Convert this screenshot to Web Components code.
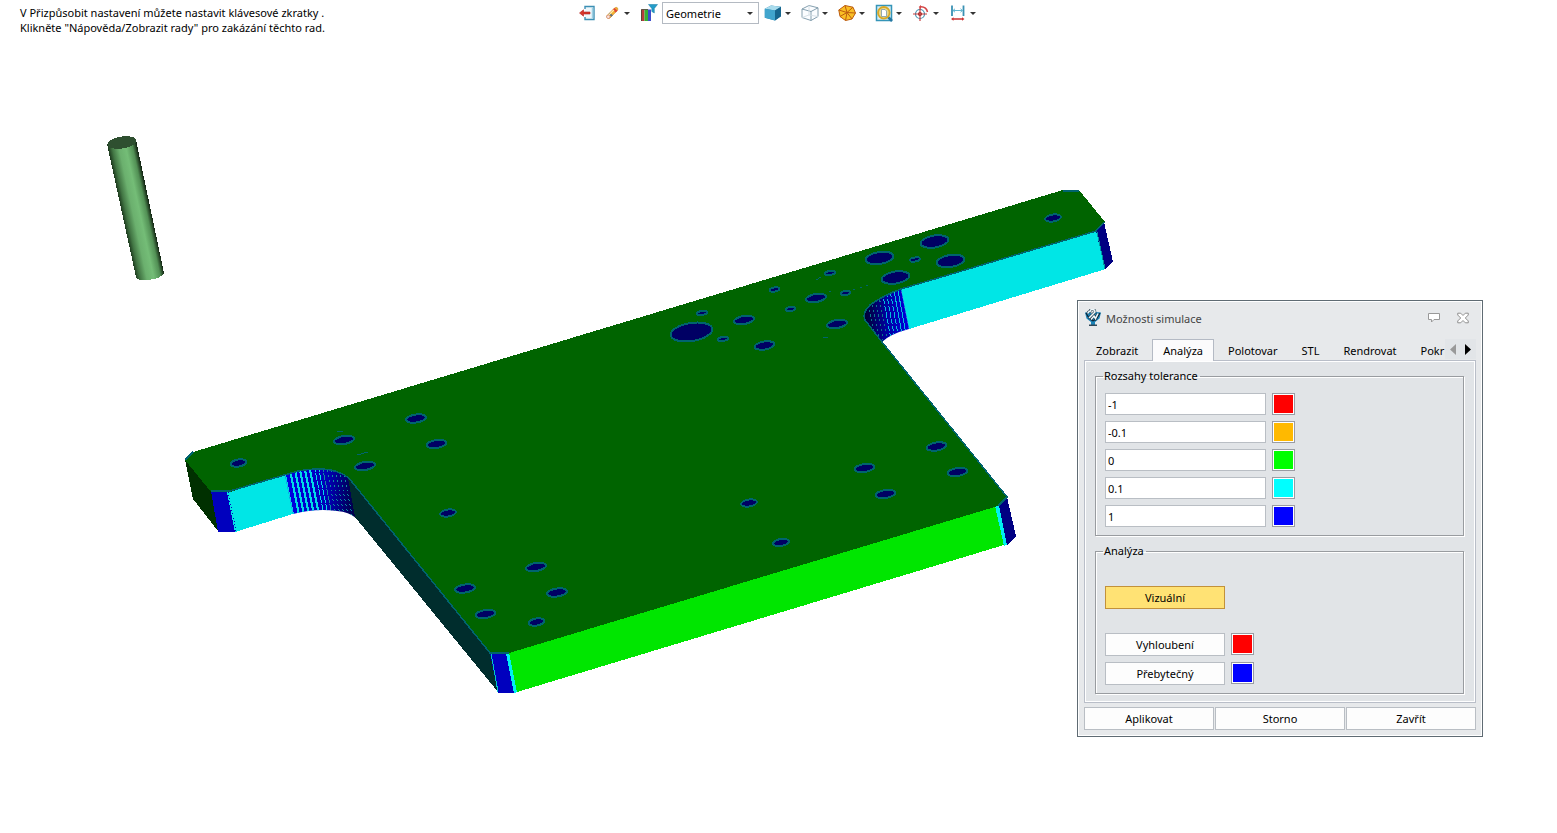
<!DOCTYPE html>
<html lang="cs">
<head>
<meta charset="utf-8">
<title>Možnosti simulace</title>
<style>
html, body { height: 100%; margin: 0; }
body { background: #fff; color: #000; font: 11px/15px "Noto Sans", "Open Sans", sans-serif; overflow: hidden; }
</style>
</head>
<body>
<cam-workspace></cam-workspace>
<script>
const define = (name, html, setup) => {
  const template = document.createElement('template');
  template.innerHTML = html;
  customElements.define(name, class extends HTMLElement {
    connectedCallback() {
      if (this.shadowRoot) return;
      this.attachShadow({ mode: 'open' }).append(template.content.cloneNode(true));
      if (setup) setup(this, this.shadowRoot);
    }
  });
};

/* Toolbar button: slotted icon, optional drop-down arrow */
define('tool-button', `
<style>
:host { display: block; }
button { display: flex; align-items: center; gap: 3px; height: 22px; margin: 0; padding: 0; border: 0; background: none; }
.arrow { width: 6px; height: 3px; fill: #333; display: none; }
:host([menu]) .arrow { display: block; }
</style>
<button type="button"><slot></slot><svg class="arrow" viewBox="0 0 6 3"><path d="M0 0h6L3 3z"/></svg></button>`,
(host, root) => root.querySelector('button').setAttribute('aria-label', host.getAttribute('label')));

define('view-toolbar', `
<style>
:host { display: flex; align-items: center; gap: 10px; padding: 2px 3px 0 0; }
svg { width: 18px; height: 18px; display: block; }
.group { display: flex; align-items: center; gap: 7px; }
.filter { display: flex; align-items: center; gap: 4px; }
.pick { position: relative; display: block; }
.pick svg { position: absolute; right: 6px; top: 10px; width: 6px; height: 3px; fill: #333; pointer-events: none; }
select { appearance: none; display: block; box-sizing: border-box; width: 97px; height: 22px; margin: 0; padding: 0 14px 0 3px; border: 1px solid #b4bac2; border-radius: 0; background: #fff; color: #000; font: inherit; }
.views { display: flex; gap: 10px; margin-left: -5px; }
</style>
<div class="group">
  <tool-button label="Konec"><svg viewBox="0 0 18 18">
    <path d="M7 5V2.500h9v13H7V13" fill="#eef7fb" stroke="#3c8fb4" stroke-width="1.400"/><path d="M14.500 3.500v11" stroke="#9fd0e4" stroke-width="1.500"/>
    <path d="M1.500 9l4-3.200v2.200H12v2H5.500v2.200z" fill="#d8382c" stroke="#b02020" stroke-width=".6"/></svg></tool-button>
  <tool-button menu label="Vymazat"><svg viewBox="0 0 18 18">
    <path d="M4 11.500L11.500 4q1.800-1.300 2.900-.2 1.100 1.200 0 2.700L7 14q-1.500 1-2.700 0-1.300-1.200-.3-2.500z" fill="#f2b02f" stroke="#c87c20" stroke-width=".5"/>
    <path d="M11.500 4l3 2.700-1.800 1.800-3-2.700z" fill="#df4638"/><path d="M6.200 9.400l3 2.700" stroke="#5f6c78" stroke-width="2"/><path d="M5.500 11.300l5.500-5.500" stroke="#fff0b4" stroke-width="1.200"/>
    <ellipse cx="5.300" cy="12.800" rx="1.700" ry="1.700" fill="#f9e3dc" stroke="#c56d60" stroke-width=".5"/></svg></tool-button>
</div>
<div class="filter">
  <tool-button label="Filtr barev"><svg viewBox="0 0 18 18">
    <path d="M1 5.500h3.500V17H1z" fill="#b83c3c"/><path d="M4.500 5.500H8V17H4.500z" fill="#35b135"/><path d="M8 5.500h3V17H8z" fill="#3d4dcc"/><path d="M1.500 17V5.500H8" fill="none" stroke="#443" stroke-width=".8"/>
    <path d="M8.500.500h9L14.300 4.500V9l-2.500-1.500v-3z" fill="#249cc9" stroke="#107aa3" stroke-width=".5"/></svg></tool-button>
  <label class="pick"><select aria-label="Filtr výběru"><option>Geometrie</option><option>Vše</option></select><svg viewBox="0 0 6 3"><path d="M0 0h6L3 3z"/></svg></label>
</div>
<div class="views">
  <tool-button menu label="Stínování"><svg viewBox="0 0 18 18">
    <path d="M.800 4.800L7 1.500l10 1.300v9.400L11 16.500.800 13.800z" fill="#2b80aa"/><path d="M.800 4.800L7 1.500l10 1.300-6 3.600z" fill="#a9dced"/><path d="M.800 4.800L11 6.400v10.100L.800 13.800z" fill="#41a5cd"/><path d="M11 6.400l6-3.600v9.400l-6 4.300z" fill="#17668e"/></svg></tool-button>
  <tool-button menu label="Pohledy"><svg viewBox="0 0 18 18" fill="#fbfdff" stroke="#7895a6" stroke-width=".9" stroke-linejoin="round">
    <path d="M1 5l7-3.500 9 2.300v8.700l-7 4L1 13.500z"/><path d="M1 5l9 2.500 7-3.700M10 7.500v9" fill="none"/><path d="M8 1.500V11l-7 2.500M8 11l9 1.500" fill="none" stroke="#d2dde3"/></svg></tool-button>
  <tool-button menu label="Síť"><svg viewBox="0 0 18 18" fill="#fabf25" stroke="#bc5c10" stroke-width="1" stroke-linejoin="round">
    <path d="M.800 6L7 1.500l8 1.700 2.500 5.800L14 15l-6.500 1.500L2 12.500z"/><path d="M.800 6L9 8.500 7 1.500M9 8.500l6-5.300M9 8.500l8.500.5M9 8.500L14 15M9 8.500l-1.500 8M9 8.500l-7 4" fill="none"/></svg></tool-button>
  <tool-button menu label="Přiblížit"><svg viewBox="0 0 18 18">
    <path d="M1.500 1.500h15v15h-15z" fill="#d7eef6" stroke="#3595b8" stroke-width="1.500"/><path d="M13 13l4 4" stroke="#2577a2" stroke-width="2.500"/>
    <circle cx="8.800" cy="8.800" r="5.800" fill="#e9d98f" stroke="#d9a824" stroke-width="1.800"/><path d="M6.500 5.500h3.500l1.500 1.500v5.500h-5z" fill="#fff" stroke="#7c98a5" stroke-width=".8"/></svg></tool-button>
  <tool-button menu label="Střed otáčení"><svg viewBox="0 0 18 18" fill="none" stroke-width="1.200">
    <circle cx="8" cy="10" r="4.500" stroke="#3f93b3"/><path d="M1 10h14M8 3.500V17" stroke="#c83e3e"/><circle cx="8" cy="10" r="1.500" fill="#d34b4b" stroke="#a33"/><path d="M9 2.800q5.500.2 6.500 5.200" stroke="#d34343" stroke-width="1.500"/><path d="M9 1v4L6.700 3z" fill="#d34343"/></svg></tool-button>
  <tool-button menu label="Měření"><svg viewBox="0 0 18 18">
    <path d="M3 1.500V12M14.500 1.500V12" stroke="#3a91b3" stroke-width="1.800"/><path d="M4 6.500h9.500M6 4.800L4 6.500l2 1.700m5.500-3.400l2 1.700-2 1.700" fill="none" stroke="#62b7d2"/><path d="M2 15l2.500-1.800v1h8.500v-1l2.500 1.800-2.500 1.800v-1H4.500v1z" fill="#cc3131"/></svg></tool-button>
</div>`);

/* Simulated stock, coloured by the tolerance ranges */
define('stock-view', `
<style>
:host { display: block; }
svg { display: block; width: 100%; height: 100%; }
</style>
<svg viewBox="0 0 1557 833" preserveAspectRatio="xMidYMid meet" shape-rendering="crispEdges" role="img" aria-label="Model">
  <defs>
    <linearGradient id="tool" gradientUnits="userSpaceOnUse" x1="107" y1="144" x2="135" y2="138">
      <stop offset="0" stop-color="#1c381d"/><stop offset=".15" stop-color="#427644"/><stop offset=".38" stop-color="#6bb06e"/><stop offset=".62" stop-color="#74bd77"/><stop offset=".85" stop-color="#529055"/><stop offset="1" stop-color="#152815"/>
    </linearGradient>
    <linearGradient id="left" gradientUnits="userSpaceOnUse" x1="285" y1="0" x2="357" y2="0"><stop offset="0" stop-color="#0000e6"/><stop offset=".6" stop-color="#0000b4"/><stop offset="1" stop-color="#00003c"/></linearGradient>
    <linearGradient id="right" gradientUnits="userSpaceOnUse" x1="865" y1="0" x2="908" y2="0"><stop offset="0" stop-color="#000032"/><stop offset=".5" stop-color="#0000a0"/><stop offset="1" stop-color="#0000dc"/></linearGradient>
    <clipPath id="leftClip"><path d="M285 475L298 471Q325 466 340 473Q348 476 352 483L356 518Q349 512 337 511Q316 508 293 514z"/></clipPath>
    <clipPath id="rightClip"><path d="M901 289Q884 295 870 305Q862 313 865 320L882 342Q890 334 909 329z"/></clipPath>
  </defs>
  <path d="M107 144L136 277Q138 281 147 280Q161 279 164 273L136 140z" fill="url(#tool)"/>
  <ellipse cx="122" cy="142.500" rx="14.500" ry="6" transform="rotate(-9 122 142.500)" fill="#2e4f30"/>

  <path d="M185 460L211 491L218 531L193 499z" fill="#003000"/>
  <path d="M211 491H228L235 532H218z" fill="#0000be"/>
  <path d="M227 492L285 475L293 514L235 532z" fill="#00e6e6"/>
  <path d="M228 492L236 531" stroke="#0000be" stroke-dasharray="1 2"/>
  <g id="ribs-left" clip-path="url(#leftClip)"><path d="M280 460h80v60h-80z" fill="url(#left)"/></g>
  <path d="M348 478L491 653L498 692L355 517z" fill="#002d2d"/>
  <path d="M490 653H507L514 693H498z" fill="#0000be"/>
  <path d="M491 653L498 692" stroke="#00c8c8" stroke-width="1"/>
  <path d="M506 653H510L517 692L514 693z" fill="#00f0f0"/>
  <path d="M509 653L997 506L1004 545L517 692z" fill="#00e600"/>
  <path d="M995 506L999 505L1008 544L1004 546z" fill="#00f0f0"/>
  <path d="M999 505L1007 497L1016 536L1007 545z" fill="#000082"/>
  <path d="M901 289L1097 231L1106 269L909 329z" fill="#00e6e6"/>
  <path d="M1096 231L1104 222L1113 262L1105 269z" fill="#000082"/>
  <path d="M1097 232L1105 269" stroke="#0096a0"/>
  <g id="ribs-right" clip-path="url(#rightClip)"><path d="M860 280h50v65h-50z" fill="url(#right)"/></g>

  <path d="M185 460L193 452L1063 190H1079L1105 222L1097 231L901 289Q884 295 870 305Q862 313 865 320L882 342L1008 497L998 506L509 653H490L352 482Q348 476 340 473Q325 466 298 471L230 492H211z" fill="#006400"/>
  <g fill="none" stroke="#00646e" stroke-width="1.500">
    <path d="M185 460L193 452M1063 191H1079M1104 222L1096 231L901 289Q884 295 870 305Q862 313 865 320L882 342L1007 497L998 506M509 653H490L352 482Q348 476 340 473Q325 466 298 471L230 491H211"/>
    <path d="M337 431h6M357 455l11-3M823 337h5M821 277l-5 3" stroke-width="1"/>
    <path d="M822 294l10-3M853 290l20-6" stroke-width="1" stroke-dasharray="2 5"/>
  </g>
  <g id="holes" fill="#000064" stroke="#00646e" stroke-width="2"></g>
</svg>`,
(host, root) => {
  const ns = 'http://www.w3.org/2000/svg';
  const add = (parent, name, attrs) => {
    const node = document.createElementNS(ns, name);
    for (const key in attrs) node.setAttribute(key, attrs[key]);
    parent.append(node);
  };
  const drill = (rx, ry, points) => points.forEach(([x, y]) =>
    add(root.getElementById('holes'), 'ellipse', { cx: x, cy: y, rx, ry, transform: `rotate(-9 ${x} ${y})` }));
  drill(21, 9, [[691.500, 332]]);
  drill(14, 6, [[879.500, 258], [934.500, 241.500], [895.500, 277.500], [950.500, 261]]);
  drill(10, 4, [[816, 298], [744, 320], [764.500, 345.500], [837, 324], [416, 418.500], [436.500, 444], [344, 440], [365, 466], [536, 567], [557, 592.500], [465, 588.500], [485.500, 614], [864.500, 468], [885.500, 494], [936.500, 446.500], [957.500, 472]]);
  drill(8, 3.500, [[1053, 218], [238.500, 463], [448, 513], [749, 503], [781, 542.500], [536.500, 622]]);
  drill(5, 2, [[830, 273], [774.500, 289.500], [702, 313], [723, 339], [790.500, 309], [845.500, 293], [915, 259.500]]);

  const left = root.getElementById('ribs-left');
  [285, 291, 296, 301, 306, 311, 316, 320, 324, 328, 332, 336, 340, 344, 348].forEach((x, i) =>
    add(left, 'path', { d: `M${x - 2} 465L${x + 9} 520`, stroke: i < 8 ? '#00dce6' : '#0a8ca0', 'stroke-width': i < 6 ? 2 : 1, 'stroke-dasharray': i < 6 ? 'none' : i < 9 ? '7 1' : '2 3' }));
  const right = root.getElementById('ribs-right');
  [898, 894, 890, 886, 882, 878, 874, 870, 866].forEach((x, i) =>
    add(right, 'path', { d: `M${x - 1} 285L${x + 10} 345`, stroke: i < 5 ? '#00bedc' : '#08788c', 'stroke-width': 1, 'stroke-dasharray': i < 2 ? 'none' : i < 5 ? '5 2' : '2 3' }));
});

define('color-swatch', `
<style>
:host { display: block; }
button { display: block; box-sizing: border-box; width: 23px; height: 22px; margin: 0; padding: 0; border: 1px solid #999ca3; box-shadow: inset 0 0 0 1px #fff; background: var(--swatch); border-radius: 0; }
</style>
<button type="button"></button>`,
(host, root) => {
  if (host.hasAttribute('color')) host.style.setProperty('--swatch', host.getAttribute('color'));
  root.querySelector('button').setAttribute('aria-label', host.getAttribute('label') || 'Barva');
});

define('push-button', `
<style>
:host { display: block; }
button { display: block; box-sizing: border-box; width: 100%; height: 23px; margin: 0; padding: 0; border: 1px solid #b9bec4; border-radius: 0; background: #fdfdfd; color: #000; font: inherit; text-align: center; }
:host([pressed]) button { background: #ffe274; border-color: #c2913a; }
</style>
<button type="button"><slot></slot></button>`);

define('tolerance-row', `
<style>
:host { display: flex; gap: 6px; }
input { box-sizing: border-box; width: 161px; height: 22px; margin: 0; padding: 1px 2px 0; border: 1px solid #b9bec4; border-radius: 0; background: #fff; color: #000; font: inherit; }
</style>
<input type="text" aria-label="Tolerance"><color-swatch></color-swatch>`,
(host, root) => {
  root.querySelector('input').value = host.getAttribute('value');
  root.querySelector('color-swatch').style.setProperty('--swatch', host.getAttribute('color'));
});

define('group-box', `
<style>
:host { display: block; }
fieldset { margin: 0; min-width: 0; padding: 9px 9px 8px; border: 1px solid #999ca0; box-shadow: 1px 1px 0 #fff, inset 1px 1px 0 #fff; }
legend { height: 16px; line-height: 16px; padding: 0 2px 0 1px; margin-left: -2px; }
</style>
<fieldset><legend></legend><slot></slot></fieldset>`,
(host, root) => { root.querySelector('legend').textContent = host.getAttribute('label'); });

define('tab-strip', `
<style>
:host { display: flex; height: 22px; margin-bottom: -1px; position: relative; }
.tabs { flex: 1; min-width: 0; display: flex; align-items: flex-end; overflow: hidden; }
button { flex: none; box-sizing: border-box; height: 21px; margin: 0; padding: 0 12px; border: 0; background: none; color: #000; font: inherit; white-space: nowrap; }
[aria-selected=true] { height: 22px; margin: 0 2px; padding: 0 10px; border: 1px solid #b4bac4; border-bottom: 0; background: #fbfbfc; }
.scroll { display: flex; width: 31px; height: 20px; background: #e2e5e8; }
.scroll button { width: 15px; padding: 0; height: 20px; }
svg { display: block; width: 8px; height: 11px; margin: 0 auto; }
</style>
<div class="tabs" role="tablist">
  <button role="tab" type="button">Zobrazit</button><button role="tab" type="button" aria-selected="true">Analýza</button><button role="tab" type="button">Polotovar</button><button role="tab" type="button">STL</button><button role="tab" type="button">Rendrovat</button><button role="tab" type="button">Pokr</button>
</div>
<div class="scroll">
  <button type="button" aria-label="Předchozí"><svg viewBox="0 0 8 11"><path d="M7 0v11L1 5.500z" fill="#999"/></svg></button>
  <button type="button" aria-label="Další"><svg viewBox="0 0 8 11"><path d="M1 0v11l6-5.500z"/></svg></button>
</div>`);

define('simulation-dialog', `
<style>
:host { display: block; box-sizing: border-box; width: 406px; padding: 7px 6px 6px; border: 1px solid #5f6b73; box-shadow: inset 0 0 0 1px #fff; background: #e7e9eb; }
header { display: flex; align-items: center; height: 20px; margin-bottom: 11px; color: #444; }
header svg { display: block; }
.logo { width: 16px; height: 18px; margin: 0 5px 0 1px; }
h2 { flex: 1; margin: 0; font: inherit; }
header button { margin: 0; padding: 0; border: 0; background: none; }
header button + button { margin: 0 7px 0 17px; }
.page { border: 1px solid #b9bec8; box-shadow: inset 0 0 0 1px #fff; background: #e1e4e7; padding: 7px 11px 8px 10px; display: grid; gap: 7px; }
.rows { display: grid; gap: 6px; }
.analysis { display: grid; grid-template-columns: 120px auto; justify-content: start; gap: 6px; padding-top: 18px; }
.wide { grid-column: 1; margin-bottom: 18px; }
.red { grid-column: 1; }
footer { display: grid; grid-template-columns: repeat(3, 1fr); gap: 1px; margin-top: 4px; }
</style>
<header>
  <svg class="logo" viewBox="0 0 16 18"><path d="M0 3.500L5 3l3 3 3-3 5 .5-1.500 6L10 13v3H6v-3L1.500 9.500z" fill="#1c84b8"/><path d="M1 4l3 5 4 3M15 4l-3 5-4 3" fill="none" stroke="#123" stroke-width="1.200"/><path d="M4 15.500h8v1.500H4z" fill="#304858"/><path d="M3 4.500q0-2 2-2 0-2 2.500-2 2.500 0 2.500 2.500L6.500 6.500 4 9m2 1.500l3-3.500 1.500 2.500L13 4.500" fill="none" stroke="#142d3b" stroke-width="2.600"/><path d="M3 4.500q0-2 2-2 0-2 2.500-2 2.500 0 2.500 2.500L6.500 6.500 4 9m2 1.500l3-3.500 1.500 2.500L13 4.500" fill="none" stroke="#eef8fc" stroke-width="1.600"/></svg>
  <h2>Možnosti simulace</h2>
  <button type="button" aria-label="Poznámka"><svg width="12" height="10" viewBox="0 0 12 10"><path d="M.500.500h11v6H6L3.500 9V6.500h-3z" fill="#fff" stroke="#999"/></svg></button>
  <button type="button" aria-label="Zavřít okno"><svg width="12" height="12" viewBox="0 0 13 12"><path d="M.800.800H4l2.500 2.500L9 .800h3.200v2L9 6l3.200 3.200v2H9L6.500 8.700 4 11.200H.800v-2L4 6 .800 2.800z" fill="#fff" stroke="#888"/></svg></button>
</header>
<tab-strip></tab-strip>
<div class="page">
  <group-box label="Rozsahy tolerance">
    <div class="rows">
      <tolerance-row value="-1" color="#ff0000"></tolerance-row>
      <tolerance-row value="-0.1" color="#ffb900"></tolerance-row>
      <tolerance-row value="0" color="#00ff00"></tolerance-row>
      <tolerance-row value="0.1" color="#00ffff"></tolerance-row>
      <tolerance-row value="1" color="#0000ff"></tolerance-row>
    </div>
  </group-box>
  <group-box label="Analýza">
    <div class="analysis">
      <push-button class="wide" pressed>Vizuální</push-button>
      <push-button class="red">Vyhloubení</push-button><color-swatch color="#ff0000" label="Barva vyhloubení"></color-swatch>
      <push-button>Přebytečný</push-button><color-swatch color="#0000ff" label="Barva přebytku"></color-swatch>
    </div>
  </group-box>
</div>
<footer><push-button>Aplikovat</push-button><push-button>Storno</push-button><push-button>Zavřít</push-button></footer>`);

define('cam-workspace', `
<style>
:host { display: block; position: relative; min-height: 100%; }
.bar { display: grid; grid-template-columns: 1fr auto 1fr; align-items: start; position: relative; z-index: 1; }
.tips { margin: 0; padding: 5px 0 0 20px; }
.tips span { display: block; white-space: nowrap; }
stock-view { position: absolute; inset: 0; height: 100vh; }
simulation-dialog { position: absolute; right: 74px; top: 300px; z-index: 2; }
</style>
<div class="bar">
  <p class="tips"><span>V Přizpůsobit nastavení můžete nastavit klávesové zkratky .</span><span>Klikněte "Nápověda/Zobrazit rady" pro zakázání těchto rad.</span></p>
  <view-toolbar></view-toolbar>
</div>
<stock-view></stock-view>
<simulation-dialog></simulation-dialog>`);
</script>
</body>
</html>
